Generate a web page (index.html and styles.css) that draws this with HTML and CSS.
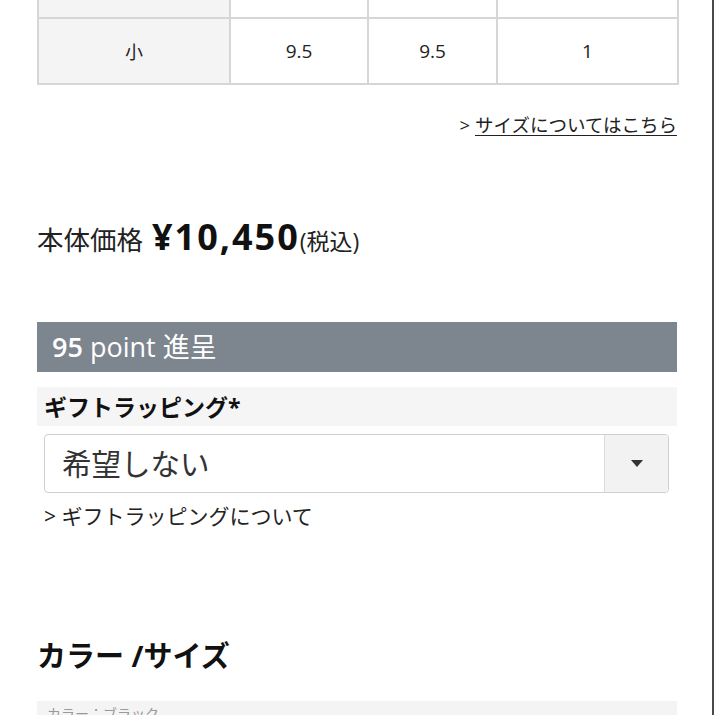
FILE: index.html
```html
<!DOCTYPE html>
<html lang="ja">
<head>
<meta charset="utf-8">
<link rel="stylesheet" href="styles.css">
</head>
<body>
<div class="page">
  <div class="content">
    <table class="size-table">
      <colgroup>
        <col class="c1"><col class="c2"><col class="c3"><col class="c4">
      </colgroup>
      <tr class="row-cut">
        <td class="head"></td><td></td><td></td><td></td>
      </tr>
      <tr class="row">
        <td class="head">小</td><td>9.5</td><td>9.5</td><td>1</td>
      </tr>
    </table>

    <div class="size-link"><span class="gt">&gt;</span> <a href="#">サイズについてはこちら</a></div>

    <div class="price">
      <span class="price-label">本体価格</span>
      <span class="price-value">¥10,450</span><span class="price-tax">(税込)</span>
    </div>

    <div class="points"><span class="pt-num">95</span> point 進呈</div>

    <div class="gift">
      <div class="gift-label">ギフトラッピング*</div>
      <div class="select">
        <div class="select-text">希望しない</div>
        <div class="select-btn">
          <svg width="12" height="7" viewBox="0 0 12 7"><path d="M0 0 L12 0 L6 7 Z" fill="#333"/></svg>
        </div>
      </div>
      <div class="gift-link">&gt; ギフトラッピングについて</div>
    </div>

    <h2 class="section-title">カラー /サイズ</h2>

    <div class="variant-box"><span class="variant-text">カラー：ブラック</span></div>
  </div>
</div>
</body>
</html>
```

FILE: styles.css
```css
html, body {
  margin: 0;
  padding: 0;
  background: #fff;
}
body {
  font-family: "Open Sans", "Noto Sans CJK JP", sans-serif;
  color: #222;
  overflow: hidden;
}
.page {
  width: 712px;
  height: 715px;
  border-right: 2px solid #4a4a4a;
  overflow: hidden;
}
.content {
  width: 640px;
  margin-left: 37px;
}
.size-table {
  width: 640px;
  border-collapse: collapse;
  table-layout: fixed;
}
.c1 { width: 192px; }
.c2 { width: 138px; }
.c3 { width: 129px; }
.c4 { width: 181px; }
.size-table td {
  border: 2px solid #d6d6d6;
  text-align: center;
  font-size: 19px;
  color: #222;
  padding: 0;
}
.size-table .row-cut td {
  border-top: none;
  height: 17px;
}
.size-table .row td {
  height: 64px;
}
.size-table td.head {
  background: #f4f4f4;
  font-size: 18px;
}
.size-link {
  text-align: right;
  font-size: 18.5px;
  margin-top: 28px;
  line-height: 24px;
  color: #222;
}
.size-link a {
  color: #222;
  text-decoration: underline;
  text-underline-offset: 3px;
}
.price {
  margin-top: 79px;
  line-height: 42px;
  display: flex;
  align-items: baseline;
}
.price-label {
  font-size: 26.5px;
  margin-right: 9px;
}
.price-value {
  font-size: 36px;
  font-weight: 700;
  color: #111;
  letter-spacing: 2px;
}
.price-tax {
  font-size: 23px;
}
.points {
  margin-top: 60px;
  height: 50px;
  background: #7d858f;
  color: #fff;
  font-size: 27px;
  line-height: 50px;
  padding-left: 15px;
}
.pt-num {
  font-weight: 600;
}
.gift {
  margin-top: 15px;
}
.gift-label {
  background: #f5f5f5;
  font-size: 23px;
  font-weight: 700;
  color: #111;
  height: 39px;
  line-height: 40px;
  padding-left: 7px;
}
.select {
  margin: 8px 8px 0 7px;
  height: 57px;
  border: 1px solid #cfcfcf;
  border-radius: 4px;
  display: flex;
  overflow: hidden;
}
.select-text {
  flex: 1;
  font-size: 29.5px;
  line-height: 57px;
  padding-left: 17px;
  color: #333;
}
.select-btn {
  width: 63px;
  background: #f2f2f2;
  border-left: 1px solid #dcdcdc;
  display: flex;
  align-items: center;
  justify-content: center;
}
.gift-link {
  margin-top: 10px;
  padding-left: 7px;
  font-size: 21px;
  line-height: 26px;
  color: #222;
}
.section-title {
  margin: 107px 0 0 0;
  font-size: 29px;
  font-weight: 700;
  line-height: 40px;
  color: #111;
}
.variant-box {
  margin-top: 25px;
  height: 40px;
  background: #f4f4f4;
  padding-left: 10px;
}
.variant-text {
  font-size: 14px;
  line-height: 26px;
  color: #999;
}
```
